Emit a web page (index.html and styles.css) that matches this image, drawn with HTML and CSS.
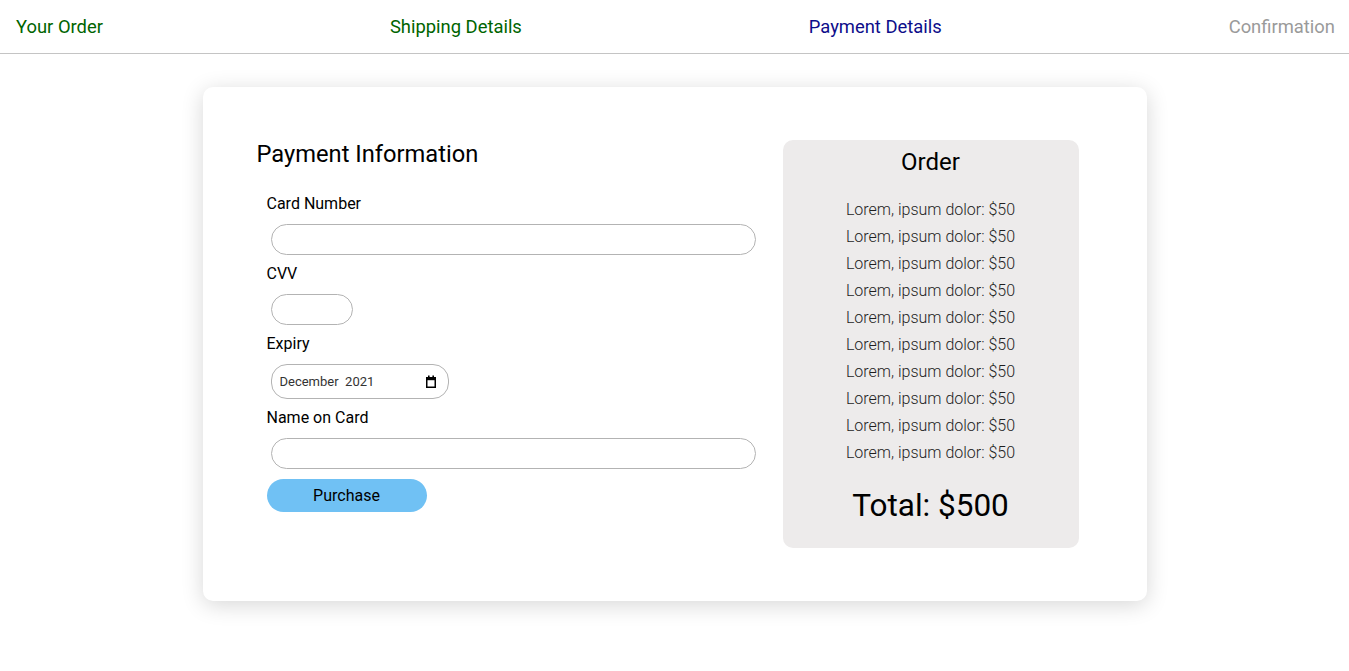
FILE: index.html
```html
<!DOCTYPE html>
<html lang="en">
<head>
<meta charset="utf-8">
<title>Payment Details</title>
<link rel="stylesheet" href="styles.css">
</head>
<body>
<nav class="steps">
  <span class="step done">Your Order</span>
  <span class="step done">Shipping Details</span>
  <span class="step current">Payment Details</span>
  <span class="step todo">Confirmation</span>
</nav>
<main class="card">
  <section class="payment">
    <h2 class="title">Payment Information</h2>
    <form class="form">
      <label class="label" for="card">Card Number</label>
      <input class="field field-wide" id="card" type="text" autofocus>
      <label class="label" for="cvv">CVV</label>
      <input class="field field-cvv" id="cvv" type="text">
      <label class="label" for="expiry">Expiry</label>
      <div class="field field-date">
        <input class="date-text" id="expiry" type="text" value="December  2021" readonly>
        <svg class="cal" width="12" height="13" viewBox="0 0 12 13" aria-hidden="true">
          <rect x="1.75" y="2.75" width="8.5" height="9.5" fill="none" stroke="#000" stroke-width="1.5"/>
          <rect x="1" y="2" width="10" height="3.2" fill="#000"/>
          <rect x="3" y="0.5" width="1.6" height="2"/>
          <rect x="7.4" y="0.5" width="1.6" height="2"/>
        </svg>
      </div>
      <label class="label" for="name">Name on Card</label>
      <input class="field field-wide field-last" id="name" type="text">
      <button class="purchase" type="button">Purchase</button>
    </form>
  </section>
  <aside class="order">
    <h2 class="order-title">Order</h2>
    <ul class="items">
      <li>Lorem, ipsum dolor: $50</li>
      <li>Lorem, ipsum dolor: $50</li>
      <li>Lorem, ipsum dolor: $50</li>
      <li>Lorem, ipsum dolor: $50</li>
      <li>Lorem, ipsum dolor: $50</li>
      <li>Lorem, ipsum dolor: $50</li>
      <li>Lorem, ipsum dolor: $50</li>
      <li>Lorem, ipsum dolor: $50</li>
      <li>Lorem, ipsum dolor: $50</li>
      <li>Lorem, ipsum dolor: $50</li>
    </ul>
    <p class="total">Total: $500</p>
  </aside>
</main>
</body>
</html>
```
FILE: styles.css
```css
* { box-sizing: border-box; }
html, body { margin: 0; padding: 0; background: #fff; }
body { font-family: Roboto, "Liberation Sans", sans-serif; color: #000; padding-bottom: 60px; }

.steps {
  display: flex;
  justify-content: space-between;
  align-items: center;
  height: 54px;
  padding: 0 14px 0 16px;
  border-bottom: 1px solid #c4c4c4;
}
.step { font-size: 18.4px; line-height: 21px; }
.step.done { color: #006400; }
.step.current { color: #0d0d8a; }
.step.todo { color: #9a9a9a; }

.card {
  width: 944px;
  margin: 33px auto 0;
  padding: 53px 69px 53px 54px;
  background: #fff;
  border-radius: 10px;
  box-shadow: 0 4px 22px rgba(0, 0, 0, 0.16);
  display: grid;
  grid-template-columns: 1fr 296px;
  column-gap: 27px;
  align-items: start;
}

.title {
  margin: 0;
  font-size: 23.7px;
  font-weight: 400;
  line-height: 28px;
}
.form {
  display: flex;
  flex-direction: column;
  align-items: flex-start;
  padding-left: 10px;
  margin-top: 26px;
}
.label {
  font-size: 16px;
  line-height: 19px;
  margin-bottom: 11px;
}
.field {
  margin: 0 0 9px 4px;
  height: 31px;
  border: 1px solid #b3b3b3;
  border-radius: 16px;
  background: #fff;
  outline: none;
  padding: 0 6px;
  font-family: Roboto, "Liberation Sans", sans-serif;
  font-size: 13px;
  color: #000;
}
.field-wide { width: 485px; }
.field-cvv { width: 82px; }
.field-date {
  width: 178px;
  height: 35px;
  padding: 0 11px 0 8px;
  display: flex;
  align-items: center;
  justify-content: space-between;
}
.date-text {
  border: none;
  outline: none;
  padding: 0;
  width: 120px;
  background: transparent;
  font-family: Roboto, "Liberation Sans", sans-serif;
  font-size: 13px;
  color: #333;
  white-space: pre;
}
.cal { display: block; flex: none; }
.field-last { margin-bottom: 10px; }
.purchase {
  width: 160px;
  height: 33px;
  border: none;
  border-radius: 17px;
  background: #70c1f4;
  font-family: Roboto, "Liberation Sans", sans-serif;
  font-size: 16px;
  color: #000;
  padding: 0;
}

.order {
  background: #edebeb;
  border-radius: 10px;
  padding: 8px 0 0;
  text-align: center;
  height: 408px;
}
.order-title {
  margin: 0;
  font-size: 24px;
  font-weight: 400;
  line-height: 28px;
}
.items {
  list-style: none;
  margin: 20px 0 0;
  padding: 0;
}
.items li {
  font-size: 16px;
  font-weight: 300;
  line-height: 27px;
  color: #1e1e1e;
}
.total {
  margin: 21px 0 0;
  font-size: 31.5px;
  line-height: 37px;
}
```
